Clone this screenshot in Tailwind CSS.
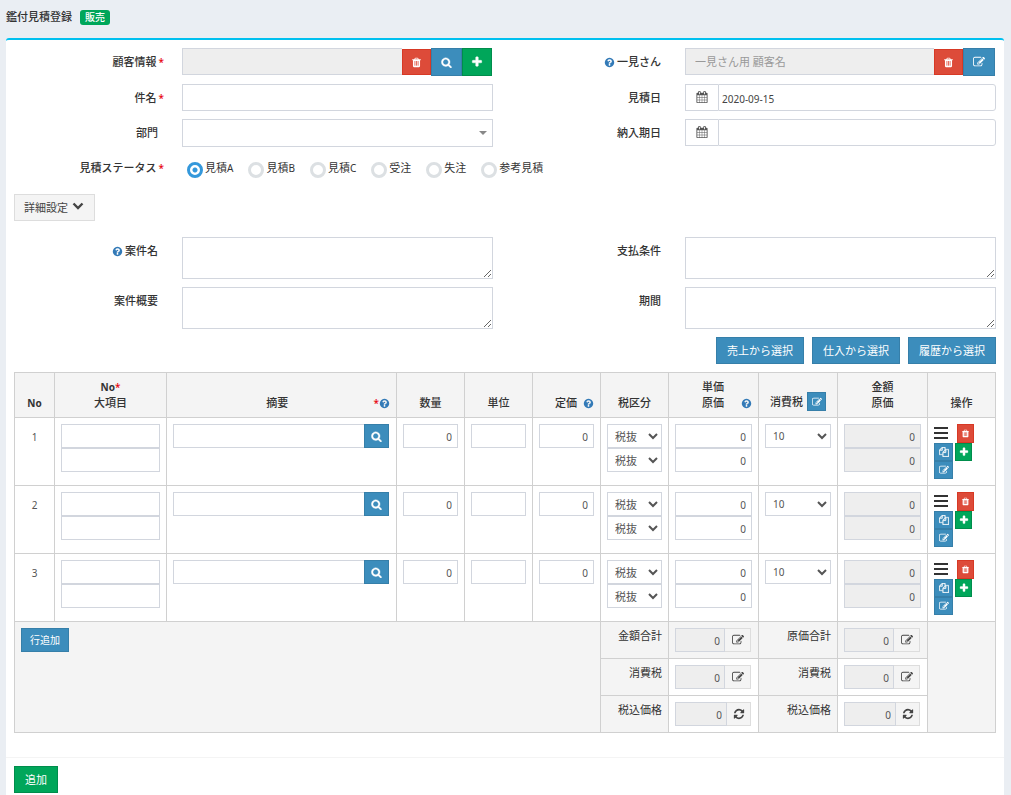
<!DOCTYPE html>
<html lang="ja">
<head>
<meta charset="utf-8">
<title>鑑付見積登録</title>
<script src="https://cdn.jsdelivr.net/npm/@tailwindcss/browser@4"></script>
</head>
<body class="min-h-screen bg-[#eaeef3] px-[6px] pr-[7px] font-['Noto_Sans','Noto_Sans_CJK_JP',sans-serif] text-[11px] leading-4 text-[#333]">
<svg class="hidden" aria-hidden="true">
  <symbol id="i-help" viewBox="0 0 1792 1792"><path d="M1024 1376v-192q0-14-9-23t-23-9h-192q-14 0-23 9t-9 23v192q0 14 9 23t23 9h192q14 0 23-9t9-23zm256-672q0-88-55.500-163t-138.500-116-170-41q-243 0-371 213-15 24 8 42l132 100q7 6 19 6 16 0 25-12 53-68 86-92 34-24 86-24 48 0 85.500 26t37.500 59q0 38-20 61t-68 45q-63 28-115.500 86.500t-52.500 125.500v36q0 14 9 23t23 9h192q14 0 23-9t9-23q0-19 21.500-49.500t54.500-49.500q32-18 49-28.500t46-35 44.500-48 28-60.500 12.500-81zm384 192q0 209-103 385.500t-279.500 279.500-385.500 103-385.500-103-279.500-279.500-103-385.500 103-385.500 279.500-279.500 385.500-103 385.500 103 279.500 279.500 103 385.500z"/></symbol>
  <symbol id="i-search" viewBox="0 0 1792 1792"><path stroke="currentColor" stroke-width="60" d="M1216 832q0-185-131.500-316.500t-316.500-131.500-316.500 131.500-131.500 316.500 131.500 316.500 316.500 131.500 316.500-131.500 131.500-316.500zm512 832q0 52-38 90t-90 38q-54 0-90-38l-343-342q-179 124-399 124-143 0-273.500-55.500t-225-150-150-225-55.500-273.500 55.500-273.500 150-225 225-150 273.500-55.500 273.500 55.500 225 150 150 225 55.500 273.500q0 220-124 399l343 343q37 37 37 90z"/></symbol>
  <symbol id="i-trash" viewBox="0 0 1792 1792"><path d="M704 1376v-704q0-14-9-23t-23-9h-64q-14 0-23 9t-9 23v704q0 14 9 23t23 9h64q14 0 23-9t9-23zm256 0v-704q0-14-9-23t-23-9h-64q-14 0-23 9t-9 23v704q0 14 9 23t23 9h64q14 0 23-9t9-23zm256 0v-704q0-14-9-23t-23-9h-64q-14 0-23 9t-9 23v704q0 14 9 23t23 9h64q14 0 23-9t9-23zm-544-992h448l-48-117q-7-9-17-11h-317q-10 2-17 11zm928 32v64q0 14-9 23t-23 9h-96v948q0 83-47 143.500t-113 60.500h-832q-66 0-113-58.500t-47-141.500v-952h-96q-14 0-23-9t-9-23v-64q0-14 9-23t23-9h309l70-167q15-37 54-63t79-26h320q40 0 79 26t54 63l70 167h309q14 0 23 9t9 23z"/></symbol>
  <symbol id="i-plus" viewBox="0 0 1792 1792"><path stroke="currentColor" stroke-width="60" d="M1600 736v192q0 40-28 68t-68 28h-416v416q0 40-28 68t-68 28h-192q-40 0-68-28t-28-68v-416h-416q-40 0-68-28t-28-68v-192q0-40 28-68t68-28h416v-416q0-40 28-68t68-28h192q40 0 68 28t28 68v416h416q40 0 68 28t28 68z"/></symbol>
  <symbol id="i-edit" viewBox="0 0 1792 1792"><path d="M888 1184l116-116-152-152-116 116v56h96v96h56zm440-720q-16-16-33 1l-350 350q-17 17-1 33t33-1l350-350q17-17 1-33zm80 594v190q0 119-84.500 203.500t-203.500 84.500h-832q-119 0-203.500-84.500t-84.500-203.500v-832q0-119 84.500-203.500t203.500-84.500h832q63 0 117 25 15 7 18 23 3 17-9 29l-49 49q-14 14-32 8-23-6-45-6h-832q-66 0-113 47t-47 113v832q0 66 47 113t113 47h832q66 0 113-47t47-113v-126q0-13 9-22l64-64q15-15 35-7t20 29zm-96-738l288 288-672 672h-288v-288zm444 132l-92 92-288-288 92-92q28-28 68-28t68 28l152 152q28 28 28 68t-28 68z"/></symbol>
  <symbol id="i-refresh" viewBox="0 0 1792 1792"><path d="M1639 1056q0 5-1 7-64 268-268 434.500t-478 166.500q-146 0-282.500-55t-243.500-157l-129 129q-19 19-45 19t-45-19-19-45v-448q0-26 19-45t45-19h448q26 0 45 19t19 45-19 45l-137 137q71 66 161 102t187 36q134 0 250-65t186-179q11-17 53-117 8-23 30-23h192q13 0 22.500 9.500t9.500 22.500zm25-800v448q0 26-19 45t-45 19h-448q-26 0-45-19t-19-45 19-45l138-138q-148-137-349-137-134 0-250 65t-186 179q-11 17-53 117-8 23-30 23h-199q-13 0-22.500-9.500t-9.500-22.500v-7q65-268 270-434.500t480-166.500q146 0 284 55.500t245 156.500l130-129q19-19 45-19t45 19 19 45z"/></symbol>
  <symbol id="i-calendar" viewBox="0 0 1792 1792"><path d="M192 1664h288v-288h-288v288zm352 0h320v-288h-320v288zm-352-352h288v-320h-288v320zm352 0h320v-320h-320v320zm-352-384h288v-288h-288v288zm736 736h320v-288h-320v288zm-384-736h320v-288h-320v288zm768 736h288v-288h-288v288zm-384-352h320v-320h-320v320zm-352-864v-288q0-13-9.500-22.500t-22.500-9.500h-64q-13 0-22.500 9.500t-9.500 22.500v288q0 13 9.500 22.500t22.500 9.500h64q13 0 22.500-9.500t9.500-22.500zm736 864h288v-320h-288v320zm-384-384h320v-288h-320v288zm384 0h288v-288h-288v288zm32-480v-288q0-13-9.500-22.500t-22.500-9.500h-64q-13 0-22.500 9.500t-9.500 22.500v288q0 13 9.500 22.500t22.500 9.500h64q13 0 22.500-9.500t9.500-22.500zm384-64v1280q0 52-38 90t-90 38h-1408q-52 0-90-38t-38-90v-1280q0-52 38-90t90-38h128v-96q0-66 47-113t113-47h64q66 0 113 47t47 113v96h384v-96q0-66 47-113t113-47h64q66 0 113 47t47 113v96h128q52 0 90 38t38 90z"/></symbol>
  <symbol id="i-copy" viewBox="0 0 1792 1792"><path stroke="currentColor" stroke-width="50" d="M1696 384q40 0 68 28t28 68v1216q0 40-28 68t-68 28h-960q-40 0-68-28t-28-68v-288h-544q-40 0-68-28t-28-68v-672q0-40 20-88t48-76l408-408q28-28 76-48t88-20h416q40 0 68 28t28 68v328q68-40 128-40h416zm-544 213l-299 299h299v-299zm-640-384l-299 299h299v-299zm196 647l316-316v-416h-384v416q0 40-28 68t-68 28h-416v640h512v-256q0-40 20-88t48-76zm956 804v-1152h-384v416q0 40-28 68t-68 28h-416v640h896z"/></symbol>
  <symbol id="i-chevron" viewBox="0 0 12 8"><path d="M1.500 1.500L6 6l4.500-4.500" fill="none" stroke="currentColor" stroke-width="2.400"/></symbol>
  <symbol id="i-bars" viewBox="0 0 14 12"><path d="M0 0h14v2H0zM0 5h14v2H0zM0 10h14v2H0z"/></symbol>
</svg>

<header class="flex h-[38px] items-center gap-2 pb-1">
  <h1 class="text-[11px] font-medium">鑑付見積登録</h1>
  <span class="rounded-[3px] bg-[#00a65a] px-[5px] text-[10px] leading-[15px] font-medium text-white">販売</span>
</header>

<main class="rounded-[3px] border-t-2 border-[#00c0ef] bg-white">
<form onsubmit="return false">
  <div class="px-2 pt-2">
    <div class="grid grid-cols-2 gap-x-6 gap-y-2">
      <div class="grid grid-cols-[168fr_311fr]">
        <label for="customer" class="pt-[6px] pr-[18px] text-right font-medium">顧客情報<span class="ml-[2px] text-[10px] text-red-600">*</span></label>
        <div class="flex">
          <input id="customer" disabled class="h-[27px] w-0 grow border border-r-0 border-[#d2d6de] bg-[#eee] px-[10px]">
          <button aria-label="顧客を削除" class="mt-px flex h-[26px] w-[29px] items-center justify-center border border-[#d73925] bg-[#dd4b39] text-white"><svg class="size-[11px] fill-current"><use href="#i-trash"/></svg></button>
          <button aria-label="顧客を検索" class="flex h-7 w-[31px] items-center justify-center border border-[#367fa9] bg-[#3c8dbc] text-white"><svg class="size-[11px] fill-current"><use href="#i-search"/></svg></button>
          <button aria-label="顧客を追加" class="mr-px flex h-7 w-[30px] items-center justify-center border border-[#008d4c] bg-[#00a65a] text-white"><svg class="size-3 fill-current"><use href="#i-plus"/></svg></button>
        </div>
      </div>
      <div class="grid grid-cols-[168fr_311fr]">
        <label for="walkin" class="flex items-start justify-end gap-[2px] pt-[6px] pr-6 font-medium"><svg class="mt-[3px] size-[11px] fill-[#337ab7]"><use href="#i-help"/></svg>一見さん</label>
        <div class="flex">
          <input id="walkin" disabled placeholder="一見さん用 顧客名" class="h-[27px] w-0 grow border border-r-0 border-[#d2d6de] bg-[#eee] px-[9px] placeholder:text-[#999]">
          <button aria-label="一見さんを削除" class="mt-px flex h-[26px] w-[29px] items-center justify-center border border-[#d73925] bg-[#dd4b39] text-white"><svg class="size-[11px] fill-current"><use href="#i-trash"/></svg></button>
          <button aria-label="一見さんを編集" class="mr-px flex h-7 w-8 items-center justify-center border border-[#367fa9] bg-[#3c8dbc] text-white"><svg class="size-3 fill-current"><use href="#i-edit"/></svg></button>
        </div>
      </div>

      <div class="grid grid-cols-[168fr_311fr]">
        <label for="subject" class="pt-[6px] pr-[18px] text-right font-medium">件名<span class="ml-[2px] text-[10px] text-red-600">*</span></label>
        <input id="subject" class="h-[27px] w-full border border-[#d2d6de] px-[10px]">
      </div>
      <div class="grid grid-cols-[168fr_311fr]">
        <label for="quote-date" class="pt-[6px] pr-6 text-right font-medium">見積日</label>
        <div class="flex">
          <span class="flex h-[27px] w-[33px] justify-center border border-r-0 border-[#d2d6de] pt-[6px]"><svg class="size-3 fill-[#555]"><use href="#i-calendar"/></svg></span>
          <input id="quote-date" value="2020-09-15" class="h-[27px] w-0 grow rounded-r-[3px] border border-[#d2d6de] px-[3px] pt-[2px] text-[10px] text-[#444]">
        </div>
      </div>

      <div class="grid grid-cols-[168fr_311fr]">
        <label for="department" class="pt-[6px] pr-6 text-right font-medium">部門</label>
        <div class="relative">
          <select id="department" class="h-7 w-full appearance-none border border-[#d2d6de] px-[10px]"><option></option></select>
          <span class="pointer-events-none absolute top-3 right-[6px] border-x-4 border-t-4 border-x-transparent border-t-[#888]"></span>
        </div>
      </div>
      <div class="grid grid-cols-[168fr_311fr]">
        <label for="due-date" class="pt-[6px] pr-6 text-right font-medium">納入期日</label>
        <div class="flex">
          <span class="flex h-[27px] w-[33px] justify-center border border-r-0 border-[#d2d6de] pt-[6px]"><svg class="size-3 fill-[#555]"><use href="#i-calendar"/></svg></span>
          <input id="due-date" class="h-[27px] w-0 grow rounded-r-[3px] border border-[#d2d6de] px-[3px] pt-[2px] text-[10px] text-[#444]">
        </div>
      </div>
    </div>

    <div class="mt-2 grid grid-cols-[168fr_814fr]">
      <span id="status-label" class="pt-[5px] pr-[18px] text-right font-medium">見積ステータス<span class="ml-[2px] text-[10px] text-red-600">*</span></span>
      <div role="radiogroup" aria-labelledby="status-label" class="flex items-start gap-[15px] pt-[5px] pl-[5px]">
        <label class="flex gap-[2px]"><input type="radio" name="status" checked class="mt-[2px] size-4 appearance-none rounded-full border-[3px] border-[#dce0e3] checked:border-[#3498db] checked:bg-[radial-gradient(circle,#3498db_2px,white_3px)]"><span>見積<span class="text-[10px]">A</span></span></label>
        <label class="flex gap-[2px]"><input type="radio" name="status" class="mt-[2px] size-4 appearance-none rounded-full border-[3px] border-[#dce0e3] checked:border-[#3498db] checked:bg-[radial-gradient(circle,#3498db_2px,white_3px)]"><span>見積<span class="text-[10px]">B</span></span></label>
        <label class="flex gap-[2px]"><input type="radio" name="status" class="mt-[2px] size-4 appearance-none rounded-full border-[3px] border-[#dce0e3] checked:border-[#3498db] checked:bg-[radial-gradient(circle,#3498db_2px,white_3px)]"><span>見積<span class="text-[10px]">C</span></span></label>
        <label class="flex gap-[2px]"><input type="radio" name="status" class="mt-[2px] size-4 appearance-none rounded-full border-[3px] border-[#dce0e3] checked:border-[#3498db] checked:bg-[radial-gradient(circle,#3498db_2px,white_3px)]"><span>受注</span></label>
        <label class="flex gap-[2px]"><input type="radio" name="status" class="mt-[2px] size-4 appearance-none rounded-full border-[3px] border-[#dce0e3] checked:border-[#3498db] checked:bg-[radial-gradient(circle,#3498db_2px,white_3px)]"><span>失注</span></label>
        <label class="flex gap-[2px]"><input type="radio" name="status" class="mt-[2px] size-4 appearance-none rounded-full border-[3px] border-[#dce0e3] checked:border-[#3498db] checked:bg-[radial-gradient(circle,#3498db_2px,white_3px)]"><span>参考見積</span></label>
      </div>
    </div>

    <button class="mt-4 flex h-[27px] items-center gap-1 border border-[#ddd] bg-[#f4f4f4] pr-[10px] pl-[9px] text-[#444]">詳細設定<svg class="mb-1 h-2 w-3"><use href="#i-chevron"/></svg></button>

    <div class="mt-4 grid grid-cols-2 gap-x-6 gap-y-2">
      <div class="grid grid-cols-[168fr_311fr]">
        <label for="project" class="flex items-start justify-end gap-[2px] pt-[6px] pr-6 font-medium"><svg class="mt-[3px] size-[11px] fill-[#337ab7]"><use href="#i-help"/></svg>案件名</label>
        <textarea id="project" class="block h-[42px] w-full border border-[#d2d6de] px-[10px] py-[5px]"></textarea>
      </div>
      <div class="grid grid-cols-[168fr_311fr]">
        <label for="payment" class="pt-[6px] pr-6 text-right font-medium">支払条件</label>
        <textarea id="payment" class="block h-[42px] w-full border border-[#d2d6de] px-[10px] py-[5px]"></textarea>
      </div>
      <div class="grid grid-cols-[168fr_311fr]">
        <label for="summary" class="pt-[6px] pr-6 text-right font-medium">案件概要</label>
        <textarea id="summary" class="block h-[42px] w-full border border-[#d2d6de] px-[10px] py-[5px]"></textarea>
      </div>
      <div class="grid grid-cols-[168fr_311fr]">
        <label for="period" class="pt-[6px] pr-6 text-right font-medium">期間</label>
        <textarea id="period" class="block h-[42px] w-full border border-[#d2d6de] px-[10px] py-[5px]"></textarea>
      </div>
    </div>

    <div class="mt-2 flex justify-end gap-2">
      <button class="h-[27px] border border-[#367fa9] bg-[#3c8dbc] px-[10px] text-white">売上から選択</button>
      <button class="h-[27px] border border-[#367fa9] bg-[#3c8dbc] px-[10px] text-white">仕入から選択</button>
      <button class="h-[27px] border border-[#367fa9] bg-[#3c8dbc] px-[10px] text-white">履歴から選択</button>
    </div>

    <table class="mt-2 w-full table-fixed border-collapse [&_td]:border [&_td]:border-[#d0d0d0] [&_td]:px-[6px] [&_td]:pt-[6px] [&_td]:pb-0 [&_td]:align-top [&_th]:border [&_th]:border-[#d0d0d0] [&_th]:px-[6px] [&_th]:pb-[6px] [&_th]:align-bottom [&_th]:font-medium">
      <colgroup><col class="w-10"><col class="w-[112px]"><col><col class="w-[68px]"><col class="w-[68px]"><col class="w-[68px]"><col class="w-[68px]"><col class="w-[90px]"><col class="w-[79px]"><col class="w-[90px]"><col class="w-[68px]"></colgroup>
      <thead class="bg-[#f4f4f4]">
        <tr class="h-[45px]">
          <th><span class="text-[10px] font-bold">No</span></th>
          <th><span class="text-[10px] font-bold">No</span><span class="text-[10px] text-red-600">*</span><br>大項目</th>
          <th><div class="flex items-center"><span class="grow pl-2">摘要</span><span class="text-[10px] text-red-600">*</span><svg class="size-[11px] fill-[#337ab7]"><use href="#i-help"/></svg></div></th>
          <th>数量</th>
          <th>単位</th>
          <th><div class="flex items-center justify-end gap-[6px]">定価<svg class="size-[11px] fill-[#337ab7]"><use href="#i-help"/></svg></div></th>
          <th>税区分</th>
          <th><div class="flex items-end"><span class="grow pl-[10px]">単価<br>原価</span><svg class="mb-[2px] size-[11px] fill-[#337ab7]"><use href="#i-help"/></svg></div></th>
          <th><div class="flex items-center justify-center gap-1">消費税<button aria-label="消費税を一括編集" class="flex size-[19px] items-center justify-center border border-[#367fa9] bg-[#3c8dbc] text-white"><svg class="size-[10px] fill-current"><use href="#i-edit"/></svg></button></div></th>
          <th>金額<br>原価</th>
          <th>操作</th>
        </tr>
      </thead>
      <tbody id="lines"></tbody>
      <tfoot>
        <tr class="h-[37px] bg-[#f4f4f4]">
          <td colspan="6" rowspan="3"><button class="h-6 border border-[#367fa9] bg-[#3c8dbc] px-2 text-[10px] text-white">行追加</button></td>
          <td class="text-right">金額合計</td>
          <td><div class="flex w-[76px]"><input aria-label="金額合計" disabled value="0" class="h-6 w-0 grow border border-[#d2d6de] bg-[#eee] px-1 pt-px text-right text-[10px] text-[#555]"><button aria-label="金額合計を編集" class="flex h-6 w-[26px] items-center justify-center border border-l-0 border-[#ddd] bg-[#f4f4f4] text-[#444]"><svg class="size-3 fill-current"><use href="#i-edit"/></svg></button></div></td>
          <td class="text-right">原価合計</td>
          <td><div class="flex w-[76px]"><input aria-label="原価合計" disabled value="0" class="h-6 w-0 grow border border-[#d2d6de] bg-[#eee] px-1 pt-px text-right text-[10px] text-[#555]"><button aria-label="原価合計を編集" class="flex h-6 w-[26px] items-center justify-center border border-l-0 border-[#ddd] bg-[#f4f4f4] text-[#444]"><svg class="size-3 fill-current"><use href="#i-edit"/></svg></button></div></td>
          <td rowspan="3"></td>
        </tr>
        <tr class="h-[37px]">
          <td class="bg-[#f4f4f4] text-right">消費税</td>
          <td><div class="flex w-[76px]"><input aria-label="金額消費税" disabled value="0" class="h-6 w-0 grow border border-[#d2d6de] bg-[#eee] px-1 pt-px text-right text-[10px] text-[#555]"><button aria-label="金額消費税を編集" class="flex h-6 w-[26px] items-center justify-center border border-l-0 border-[#ddd] bg-[#f4f4f4] text-[#444]"><svg class="size-3 fill-current"><use href="#i-edit"/></svg></button></div></td>
          <td class="bg-[#f4f4f4] text-right">消費税</td>
          <td><div class="flex w-[76px]"><input aria-label="原価消費税" disabled value="0" class="h-6 w-0 grow border border-[#d2d6de] bg-[#eee] px-1 pt-px text-right text-[10px] text-[#555]"><button aria-label="原価消費税を編集" class="flex h-6 w-[26px] items-center justify-center border border-l-0 border-[#ddd] bg-[#f4f4f4] text-[#444]"><svg class="size-3 fill-current"><use href="#i-edit"/></svg></button></div></td>
        </tr>
        <tr class="h-[37px]">
          <td class="bg-[#f4f4f4] text-right">税込価格</td>
          <td><div class="flex w-[76px]"><input aria-label="税込金額" disabled value="0" class="h-6 w-0 grow border border-[#d2d6de] bg-[#eee] px-1 pt-px text-right text-[10px] text-[#555]"><button aria-label="税込金額を再計算" class="flex h-6 w-6 items-center justify-center border border-l-0 border-[#ddd] bg-[#f4f4f4] text-[#444]"><svg class="size-3 fill-current"><use href="#i-refresh"/></svg></button></div></td>
          <td class="bg-[#f4f4f4] text-right">税込価格</td>
          <td><div class="flex w-[76px]"><input aria-label="税込原価" disabled value="0" class="h-6 w-0 grow border border-[#d2d6de] bg-[#eee] px-1 pt-px text-right text-[10px] text-[#555]"><button aria-label="税込原価を再計算" class="flex h-6 w-6 items-center justify-center border border-l-0 border-[#ddd] bg-[#f4f4f4] text-[#444]"><svg class="size-3 fill-current"><use href="#i-refresh"/></svg></button></div></td>
        </tr>
      </tfoot>
    </table>
  </div>
  <div class="mt-6 border-t border-[#f4f4f4] p-2">
    <button class="h-[27px] border border-[#008d4c] bg-[#00a65a] px-[10px] text-white">追加</button>
  </div>
</form>
</main>

<template id="line">
  <tr class="h-[68px]">
    <td class="text-center text-[10px]"><div data-no class="pt-[5px] text-[#555]"></div></td>
    <td><input aria-label="No" class="block h-6 w-full border border-[#d2d6de] px-[5px]"><input aria-label="大項目" class="block h-6 w-full border border-[#d2d6de] px-[5px]"></td>
    <td><div class="flex"><input aria-label="摘要" class="h-6 w-0 grow border border-r-0 border-[#d2d6de] px-[5px]"><button aria-label="摘要を検索" class="mr-px flex h-6 w-[25px] items-center justify-center border border-[#367fa9] bg-[#3c8dbc] text-white"><svg class="size-[11px] fill-current"><use href="#i-search"/></svg></button></div></td>
    <td><input aria-label="数量" value="0" class="block h-6 w-full border border-[#d2d6de] px-[5px] pt-px text-right text-[10px] text-[#555]"></td>
    <td><input aria-label="単位" class="block h-6 w-full border border-[#d2d6de] px-[5px]"></td>
    <td><input aria-label="定価" value="0" class="block h-6 w-full border border-[#d2d6de] px-[5px] pt-px text-right text-[10px] text-[#555]"></td>
    <td><select aria-label="単価の税区分" class="block h-6 w-full border border-[#d2d6de] bg-white pl-[3px] text-[#555]"><option>税抜</option><option>税込</option></select><select aria-label="原価の税区分" class="block h-6 w-full border border-[#d2d6de] bg-white pl-[3px] text-[#555]"><option>税抜</option><option>税込</option></select></td>
    <td><input aria-label="単価" value="0" class="block h-6 w-full border border-[#d2d6de] px-[5px] pt-px text-right text-[10px] text-[#555]"><input aria-label="原価" value="0" class="block h-6 w-full border border-[#d2d6de] px-[5px] pt-px text-right text-[10px] text-[#555]"></td>
    <td><select aria-label="消費税" class="block h-6 w-full border border-[#d2d6de] bg-white pl-[3px] text-[10px] text-[#555]"><option>10</option><option>8</option></select></td>
    <td><input aria-label="金額" disabled value="0" class="block h-6 w-full border border-[#d2d6de] bg-[#eee] px-[5px] pt-px text-right text-[10px] text-[#555]"><input aria-label="原価金額" disabled value="0" class="block h-6 w-full border border-[#d2d6de] bg-[#eee] px-[5px] pt-px text-right text-[10px] text-[#555]"></td>
    <td>
      <div class="flex gap-[9px]"><button aria-label="並べ替え" class="flex h-[19px] w-[14px] items-center"><svg class="mb-px h-3 w-[14px] fill-[#333]"><use href="#i-bars"/></svg></button><button aria-label="行を削除" class="flex h-[19px] w-[17px] items-center justify-center border border-[#d73925] bg-[#dd4b39] text-white"><svg class="size-[9px] fill-current"><use href="#i-trash"/></svg></button></div>
      <div class="flex gap-[2px]"><button aria-label="行を複製" class="flex h-[18px] w-[19px] items-center justify-center border border-[#367fa9] bg-[#3c8dbc] text-white"><svg class="size-[10px] fill-current"><use href="#i-copy"/></svg></button><button aria-label="行を挿入" class="flex h-[18px] w-[17px] items-center justify-center border border-[#008d4c] bg-[#00a65a] text-white"><svg class="size-[10px] fill-current"><use href="#i-plus"/></svg></button></div>
      <button aria-label="行を編集" class="flex h-[18px] w-[19px] items-center justify-center border border-[#367fa9] bg-[#3c8dbc] text-white"><svg class="size-[10px] fill-current"><use href="#i-edit"/></svg></button>
    </td>
  </tr>
</template>
<script>
  const body = document.getElementById('lines');
  for (const no of [1, 2, 3]) {
    const row = document.getElementById('line').content.cloneNode(true);
    row.querySelector('[data-no]').textContent = no;
    body.append(row);
  }
</script>
</body>
</html>
